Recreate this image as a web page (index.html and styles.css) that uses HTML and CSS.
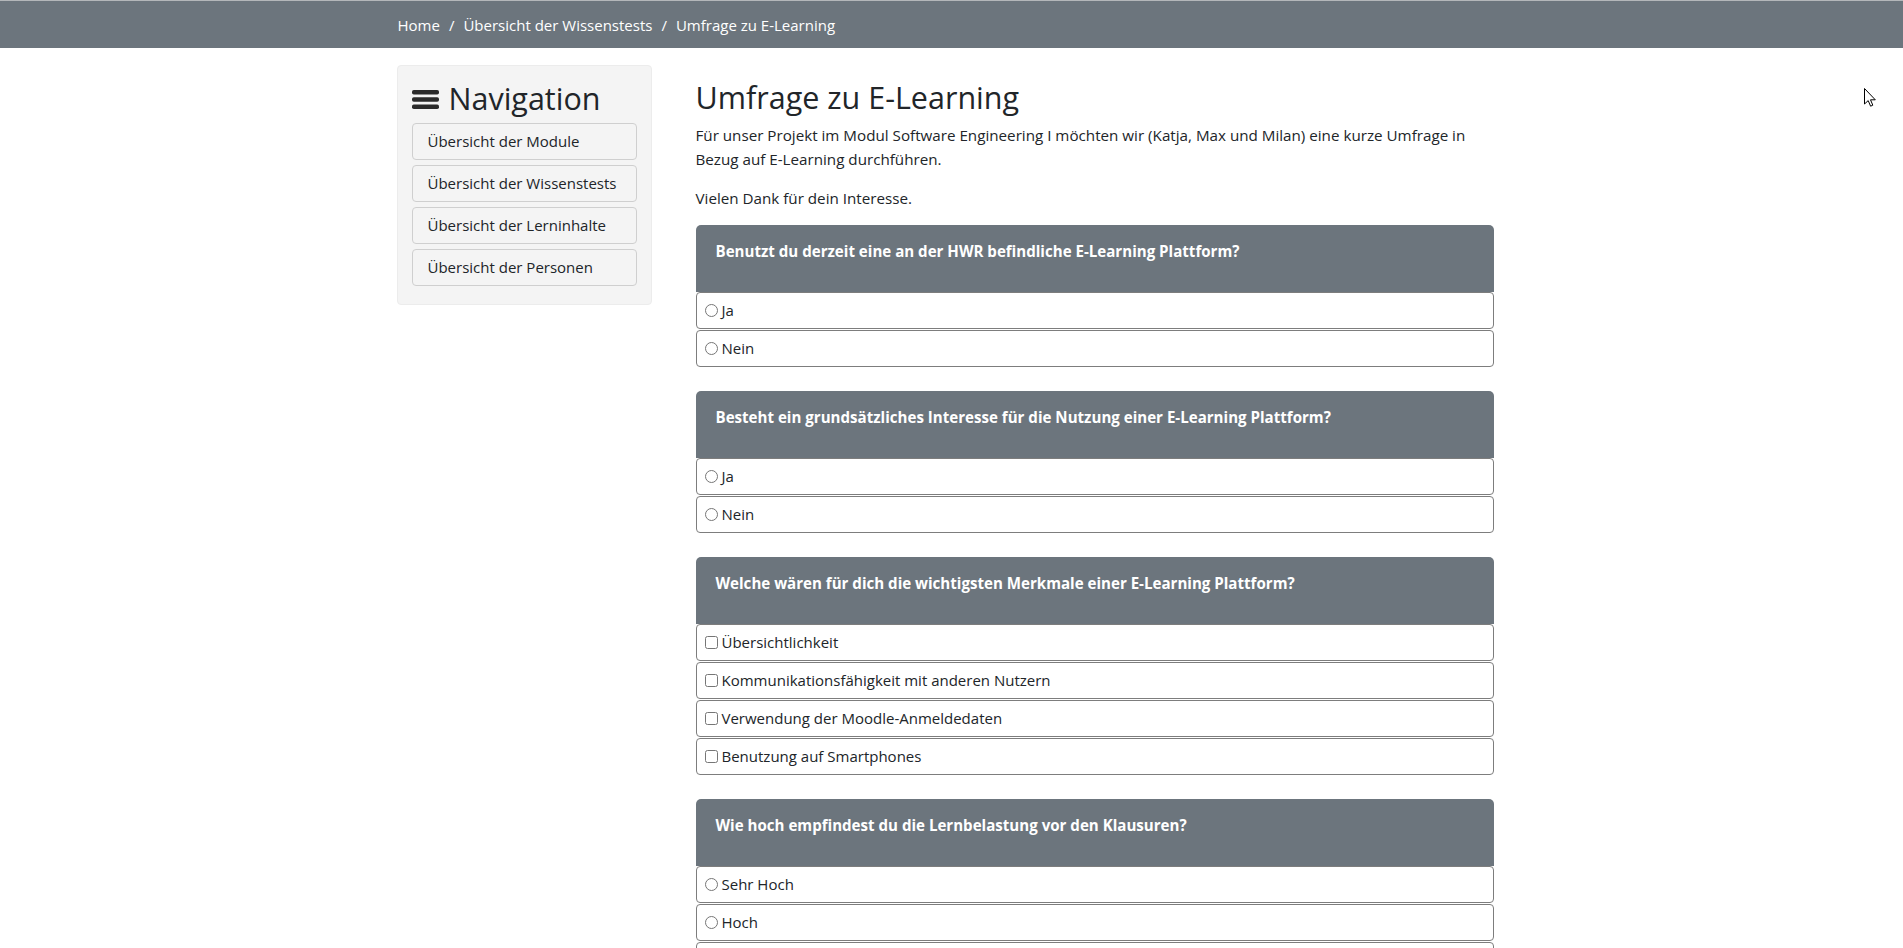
FILE: index.html
```html
<!DOCTYPE html>
<html lang="de">
<head>
<meta charset="utf-8">
<title>Umfrage zu E-Learning</title>
<link rel="stylesheet" href="styles.css">
</head>
<body>
<header class="topbar">
  <div class="container">
    <nav class="breadcrumb">
      <a class="crumb" href="#">Home</a>
      <span class="sep">/</span>
      <a class="crumb" href="#">Übersicht der Wissenstests</a>
      <span class="sep">/</span>
      <span class="crumb">Umfrage zu E-Learning</span>
    </nav>
  </div>
</header>

<div class="container layout">
  <aside class="sidebar">
    <h3 class="nav-title">
      <svg class="bars" viewBox="0 0 27 21" width="27" height="21" aria-hidden="true">
        <rect x="0" y="1" width="27" height="4.5" rx="1.8"/>
        <rect x="0" y="8.25" width="27" height="4.5" rx="1.8"/>
        <rect x="0" y="15.5" width="27" height="4.5" rx="1.8"/>
      </svg>
      <span>Navigation</span>
    </h3>
    <a class="nav-btn" href="#">Übersicht der Module</a>
    <a class="nav-btn" href="#">Übersicht der Wissenstests</a>
    <a class="nav-btn" href="#">Übersicht der Lerninhalte</a>
    <a class="nav-btn" href="#">Übersicht der Personen</a>
  </aside>

  <main class="content">
    <h2 class="title">Umfrage zu E-Learning</h2>
    <p class="lead">Für unser Projekt im Modul Software Engineering I möchten wir (Katja, Max und Milan) eine kurze Umfrage in Bezug auf E-Learning durchführen.</p>
    <p class="lead">Vielen Dank für dein Interesse.</p>

    <section class="card">
      <div class="card-header">Benutzt du derzeit eine an der HWR befindliche E-Learning Plattform?</div>
      <label class="option"><input type="radio" name="q1">Ja</label>
      <label class="option"><input type="radio" name="q1">Nein</label>
    </section>

    <section class="card">
      <div class="card-header">Besteht ein grundsätzliches Interesse für die Nutzung einer E-Learning Plattform?</div>
      <label class="option"><input type="radio" name="q2">Ja</label>
      <label class="option"><input type="radio" name="q2">Nein</label>
    </section>

    <section class="card">
      <div class="card-header">Welche wären für dich die wichtigsten Merkmale einer E-Learning Plattform?</div>
      <label class="option"><input type="checkbox">Übersichtlichkeit</label>
      <label class="option"><input type="checkbox">Kommunikationsfähigkeit mit anderen Nutzern</label>
      <label class="option"><input type="checkbox">Verwendung der Moodle-Anmeldedaten</label>
      <label class="option"><input type="checkbox">Benutzung auf Smartphones</label>
    </section>

    <section class="card">
      <div class="card-header">Wie hoch empfindest du die Lernbelastung vor den Klausuren?</div>
      <label class="option"><input type="radio" name="q4">Sehr Hoch</label>
      <label class="option"><input type="radio" name="q4">Hoch</label>
      <label class="option"><input type="radio" name="q4">Mittel</label>
      <label class="option"><input type="radio" name="q4">Niedrig</label>
      <label class="option"><input type="radio" name="q4">Sehr Niedrig</label>
    </section>
  </main>
</div>

<svg class="cursor" viewBox="0 0 12 19" width="12" height="19" aria-hidden="true">
  <path d="M0.5 0.5 L0.5 16 L4.2 12.6 L6.6 18.2 L8.8 17.2 L6.5 11.8 L11.3 11.8 Z" fill="#fff" stroke="#000" stroke-width="1" stroke-linejoin="round"/>
</svg>
</body>
</html>
```

FILE: styles.css
```css
* { box-sizing: border-box; }

html, body {
  margin: 0;
  padding: 0;
}

body {
  font-family: "Open Sans", "Noto Sans", "Liberation Sans", sans-serif;
  font-size: 15px;
  line-height: 24px;
  color: #212529;
  background: #fff;
}

.container {
  width: 1140px;
  margin: 0 auto;
  padding: 0 15px;
}

/* top bar with breadcrumb */
.topbar {
  background: #6c757d;
  border-top: 1px solid #b4b7ba;
  height: 48px;
}

.breadcrumb {
  display: flex;
  align-items: center;
  height: 47px;
  padding-left: 1px;
  color: #fff;
  font-size: 15px;
}

.crumb {
  color: #fff;
  text-decoration: none;
}

.sep {
  padding: 0 9px;
}

/* two-column layout */
.layout {
  display: grid;
  grid-template-columns: 255px 1fr;
  column-gap: 44px;
  padding-top: 17px;
}

/* sidebar */
.sidebar {
  align-self: start;
  background: #f4f4f4;
  border: 1px solid #ececec;
  border-radius: 4px;
  padding: 14px 14px 13px 14px;
}

.nav-title {
  display: flex;
  align-items: center;
  gap: 10px;
  margin: 0 0 7px 0;
  font-size: 30.5px;
  font-weight: 400;
  line-height: 36px;
  color: #212529;
}

.bars {
  fill: #2b2b2b;
  flex: none;
  margin-top: 2px;
}

.nav-btn {
  display: block;
  background: #f4f4f4;
  border: 1px solid #cfcfcf;
  border-radius: 4px;
  padding: 6px 15px;
  line-height: 23px;
  margin-bottom: 5px;
  color: #212529;
  text-decoration: none;
  font-size: 15px;
}

/* main content */
.content {
  padding: 13px 13px 40px 0;
}

.title {
  margin: 0 0 7px 0;
  font-size: 30.5px;
  font-weight: 400;
  line-height: 38px;
  color: #212529;
}

.lead {
  margin: 0 0 15px 0;
  font-size: 15.2px;
}

.card {
  margin-bottom: 24px;
}

.card-header {
  background: #6c757d;
  color: #fff;
  font-weight: 700;
  font-size: 15.1px;
  line-height: 22px;
  padding: 15px 20px 30px 20px;
  border-radius: 5px 5px 0 0;
}

.option {
  display: flex;
  align-items: center;
  border: 1px solid #7d7d7d;
  border-radius: 4px;
  padding: 6px 3px;
  line-height: 23px;
  margin-top: 1px;
  background: #fff;
}

.card-header + .option {
  margin-top: 0;
}

.option input {
  margin: 0 4px 0 5px;
  width: 13px;
  height: 13px;
  flex: none;
}

.cursor {
  position: absolute;
  left: 1864px;
  top: 88px;
}
```
